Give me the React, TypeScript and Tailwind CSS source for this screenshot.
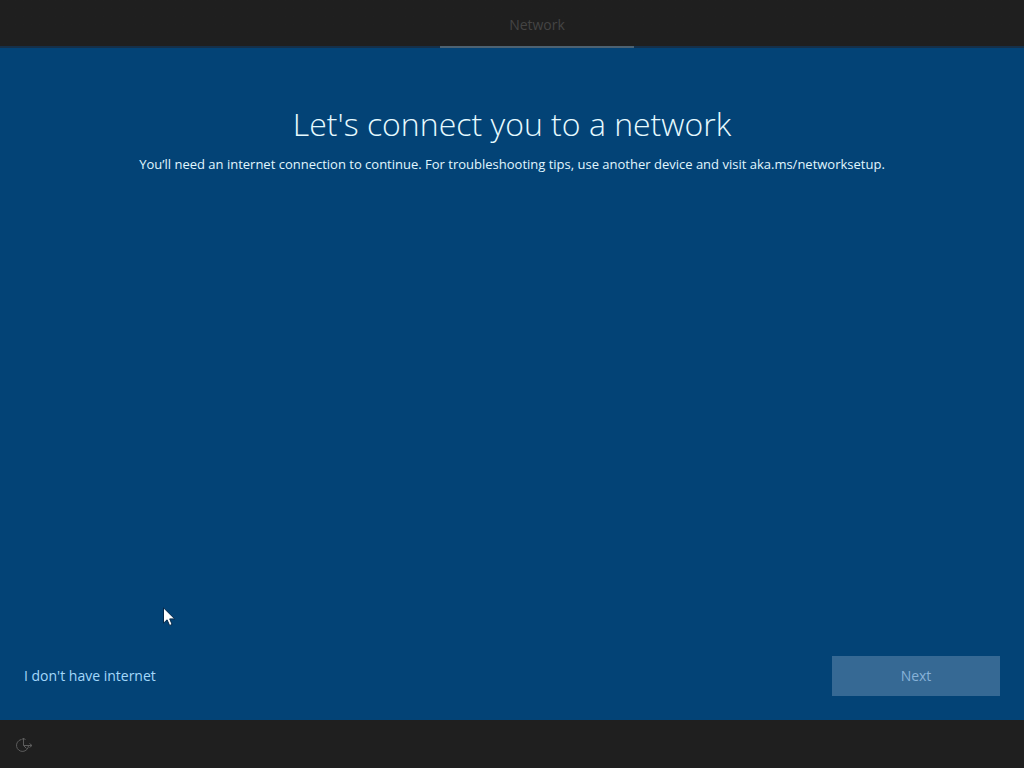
function EaseOfAccessIcon() {
  return (
    <svg width="20" height="18" viewBox="0 0 20 18" fill="none" stroke="#5c5c5c" strokeWidth="1" aria-hidden="true">
      <path d="M7 4.6A6 6 0 1 0 14.5 10.5" />
      <path d="M9.5 3v7.5H18" />
      <path d="M7.5 5l2-2 2 2" />
      <path d="M15.5 8.5l2.5 2-2.5 2" />
      <path d="M9.5 10.5l3 3" />
    </svg>
  );
}

function Pointer() {
  return (
    <svg
      className="pointer-events-none absolute bottom-[93px] left-[163px]"
      width="13"
      height="20"
      viewBox="0 0 13 20"
      aria-hidden="true"
    >
      <path
        d="M.5.8v15.4l3.6-3.4 2.5 5.7 2.5-1.1-2.4-5.5h5z"
        fill="#fff"
        stroke="#06294a"
        strokeWidth="1"
      />
    </svg>
  );
}

export default function App() {
  return (
    <div className="flex min-h-screen flex-col bg-[#034376] font-['Open_Sans','Noto_Sans',sans-serif] text-white">
      <header className="flex h-12 justify-center bg-linear-to-b from-[#1f1f1f] from-96% to-[#15304a] to-96%">
        <nav className="ml-[50px] flex" aria-label="Setup steps">
          <a
            href="#network"
            aria-current="step"
            className="flex w-[194px] items-center justify-center border-b-2 border-[#4d6272] pt-1 text-sm text-[#444444]"
          >
            Network
          </a>
        </nav>
      </header>

      <main className="relative flex grow flex-col">
        <div className="flex grow flex-col items-center gap-2 px-6 pt-14 text-center">
          <h1 className="text-[32px] leading-10 font-light text-[#e6faff]">Let's connect you to a network</h1>
          <p className="text-[13px] leading-6 text-[#e0f7ff]">
            You’ll need an internet connection to continue. For troubleshooting tips, use another device and visit
            aka.ms/networksetup.
          </p>
        </div>

        <div className="flex items-center justify-between p-6">
          <a href="#offline" className="text-sm text-[#a3d8fb]">
            I don't have internet
          </a>
          <button
            type="button"
            disabled
            className="h-10 w-42 bg-[#366994] text-sm text-[#87b2d8]"
          >
            Next
          </button>
        </div>
        <Pointer />
      </main>

      <footer className="flex h-12 items-center bg-[#1f1f1f] px-[14px]">
        <button type="button" aria-label="Ease of Access">
          <EaseOfAccessIcon />
        </button>
      </footer>
    </div>
  );
}
